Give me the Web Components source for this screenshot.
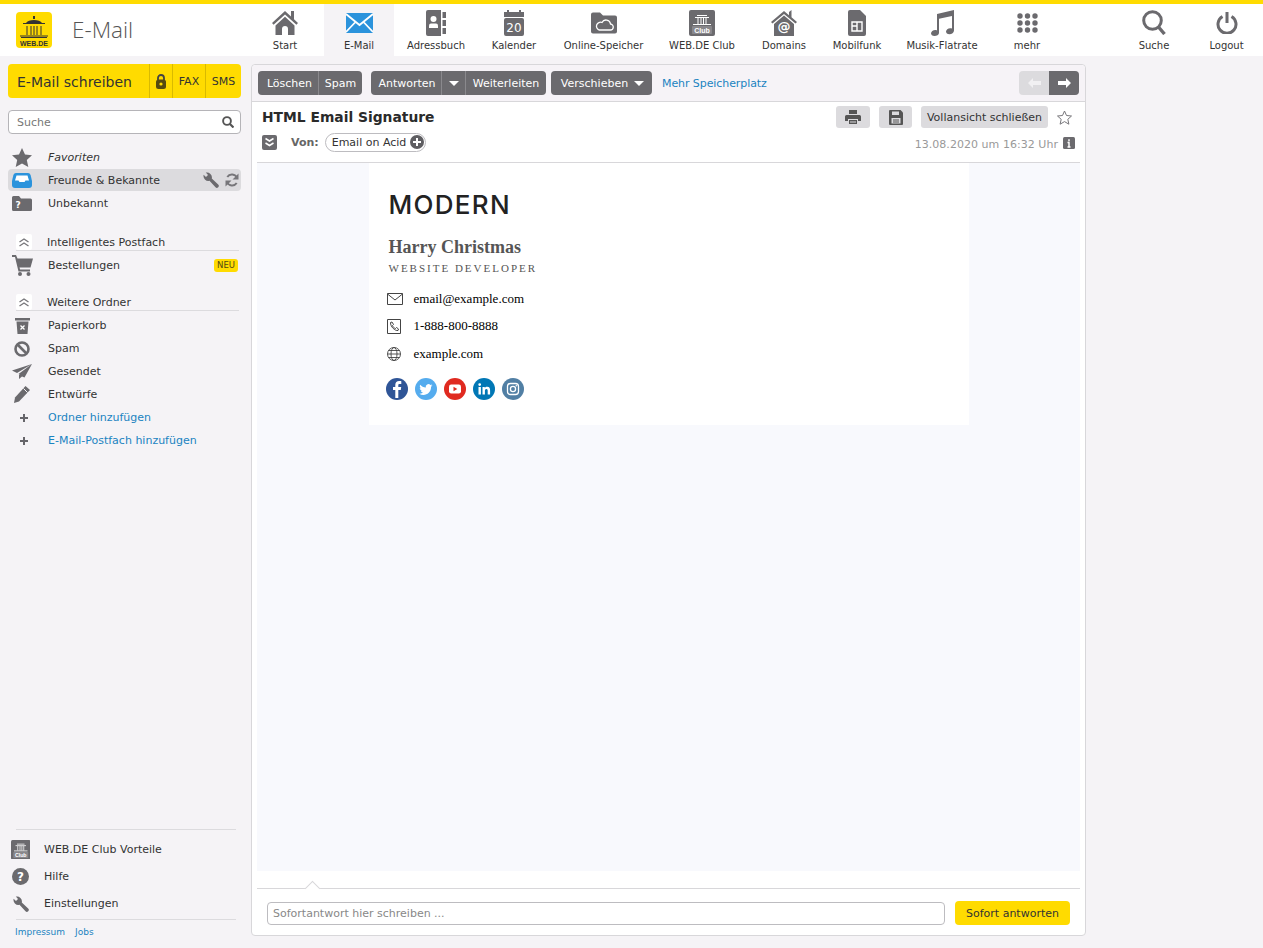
<!DOCTYPE html>
<html lang="de"><head><meta charset="utf-8"><title>WEB.DE E-Mail</title>
<style>
html,body{margin:0;height:948px;overflow:hidden;background:#f5f3f6;font:11px "DejaVu Sans",sans-serif;color:#333}
body{display:flex;flex-direction:column}
x-columns{flex:1}
</style></head><body>
<x-topbar></x-topbar>
<x-columns>
 <x-sidebar></x-sidebar>
 <x-mail></x-mail>
</x-columns>
<script>
const G='#6b6a6e';
const ICONS={
home:[26,26,`<path fill="${G}" d="M0 13 13 1l6 5.500V1h3v8.300l4 3.700-1.600 1.800L13 4.400 1.600 14.800zM3.500 15.500 13 6.800l9.500 8.700V25H16v-6a3 3 0 0 0-6 0v6H3.500z"/>`],
mail:[27,20,`<rect width="27" height="20" rx="1" fill="#2b93dc"/><path d="M0 1l13.500 11L27 1M0 19l9-9.500M27 19l-9-9.500" fill="none" stroke="#fff" stroke-width="1.800"/>`],
book:[20,26,`<path fill="${G}" d="M2 0h13v26H2a2 2 0 0 1-2-2V2a2 2 0 0 1 2-2zM16.500 2H20v6h-3.500zM16.500 10H20v6h-3.500zM16.500 18H20v6h-3.500z"/><circle cx="7.500" cy="9" r="3" fill="#fff"/><path fill="#fff" d="M3 18v-2.500q0-2 2-2h5q2 0 2 2V18z"/>`],
cal:[20,26,`<path fill="${G}" d="M0 2h3V0h2v2h10V0h2v2h3v5H0zM2 8h16a2 2 0 0 1 2 2v14a2 2 0 0 1-2 2H2a2 2 0 0 1-2-2V10a2 2 0 0 1 2-2z"/><text x="10" y="22" text-anchor="middle" fill="#fff" font-family="DejaVu Sans" font-size="12">20</text>`],
cloud:[26,22,`<path fill="${G}" d="M0 2.500A2 2 0 0 1 2 .5h7l3 3h12a2 2 0 0 1 2 2v14a2 2 0 0 1-2 2H2a2 2 0 0 1-2-2z"/><path fill="none" stroke="#fff" stroke-width="1.300" d="M8 18h11a3 3 0 0 0 .5-6 4.500 4.500 0 0 0-8.500-1.500A3.800 3.800 0 0 0 8 18z"/>`],
club:[26,26,`<rect width="26" height="26" rx="2" fill="${G}"/><path fill="none" stroke="#fff" stroke-width="1" d="M6 7.500h14M8 5.500h10M9 8v6M12 8v6M14.500 8v6M17 8v6M4 14.500h18"/><rect x="3" y="16" width="20" height="8" rx="1" fill="#88878b"/><text x="13" y="22.500" text-anchor="middle" fill="#fff" font-family="Liberation Sans" font-size="7" font-weight="700">Club</text>`],
domain:[26,26,`<path fill="${G}" d="M0 12 13 1l5 4.200V2l2.500-2v7.300L26 12l-1.500 1.600L13 4 1.500 13.600zM3 14 13 5.500 23 14v12H3z"/><text x="13" y="21" text-anchor="middle" fill="#fff" font-family="DejaVu Sans" font-size="13" font-weight="700">@</text>`],
sim:[18,26,`<path fill="${G}" d="M2 0h10l6 6v18a2 2 0 0 1-2 2H2a2 2 0 0 1-2-2V2a2 2 0 0 1 2-2z"/><path fill="none" stroke="#fff" stroke-width="1.400" d="M4 12h10v9H4zM9 12v9M4 16h5"/>`],
music:[24,26,`<path fill="${G}" d="M7 4 24 0v20.500c0 2.200-2.300 3.800-4.500 3.800S16 23 16 21.500s2-3.300 4.200-3.300c.6 0 1.300.1 1.800.4V6L9 8.800V23c0 1.700-2.300 3-4.500 3S1 24.800 1 23.300s2-3.300 4.300-3.300c.6 0 1.200.1 1.700.4z"/>`],
dots:[21,20,[3,10.500,18].flatMap(x=>[3,10,17].map(y=>`<circle cx="${x}" cy="${y}" r="2.700" fill="${G}"/>`)).join('')],
search:[24,25,`<circle cx="10.500" cy="10.500" r="8.800" fill="none" stroke="${G}" stroke-width="3"/><path d="M16.500 17l6 7" stroke="${G}" stroke-width="3.400" fill="none"/>`],
power:[22,22,`<path d="M6.500 4.500a9 9 0 1 0 9 0M11 0v11" fill="none" stroke="${G}" stroke-width="3"/>`],
lock:[10,15,`<path d="M2 6V4a3 3 0 0 1 6 0v2" fill="none" stroke="#444" stroke-width="1.800"/><rect y="5.500" width="10" height="9.500" rx="2.500" fill="#554a10"/><circle cx="5" cy="10" r="1.600" fill="#ffdb00"/>`],
lens:[12,12,`<circle cx="5" cy="5" r="3.900" fill="none" stroke="#555" stroke-width="1.900"/><path d="M8 8l3.500 3.500" stroke="#555" stroke-width="2.200"/>`],
star:[20,19,`<path fill="${G}" d="M10 0l3 6.500 7 .8-5.200 4.700 1.500 7L10 15.400 3.700 19l1.500-7L0 7.300l7-.8z"/>`],
inbox:[20,15,`<path fill="#2b93dc" d="M4 0h12q2 0 2.600 2L20 8v4q0 3-3 3H3q-3 0-3-3V8l1.400-6Q2 0 4 0z"/><path fill="#fff" d="M4.500 2.500h11L17 7.500h-3.500l-1 1.500h-5l-1-1.500H3z"/>`],
qfolder:[20,15,`<path fill="${G}" d="M0 1.500Q0 0 1.500 0H7l2 2.500h9.500q1.500 0 1.500 1.500v9.500q0 1.500-1.500 1.500h-17Q0 15 0 13.500z"/><text x="6" y="12" text-anchor="middle" fill="#fff" font-family="DejaVu Sans" font-size="9" font-weight="700">?</text>`],
chev:[16,16,`<rect width="16" height="16" rx="2" fill="#fff"/><path d="M3.500 8 8 5l4.500 3M3.500 12 8 9l4.500 3" fill="none" stroke="#77767a" stroke-width="1.300"/>`],
cart:[21,21,`<path fill="${G}" d="M0 0h4l1.500 3.500H21l-2.500 9H7.500l.6 2H18v2H6.500L3 2H0z"/><circle cx="8" cy="19" r="2" fill="${G}"/><circle cx="16.500" cy="19" r="2" fill="${G}"/>`],
trash:[15,16,`<path fill="${G}" d="M0 0h15v2.500H0zM1.500 3.500h12L12.500 16h-10z"/><path d="M5.500 7.500l4 4M9.500 7.500l-4 4" stroke="#fff" stroke-width="1.300"/>`],
ban:[16,16,`<circle cx="8" cy="8" r="6.500" fill="none" stroke="${G}" stroke-width="2.600"/><path d="M3.500 3.500l9 9" stroke="${G}" stroke-width="2.600"/>`],
plane:[20,15,`<path fill="${G}" d="M20 0 0 6.500l5 2.500zM20 0 6.500 10l5.500 2zM20 0 7 11v4l3-2.500 2.500 1z"/>`],
pencil:[16,17,`<path fill="${G}" d="M11.500 0 16 4 5 15.500 0 17l1-5.500z"/><path d="M9.500 2.500l4 4" stroke="#f5f3f6" stroke-width="1"/>`],
plus:[14,10,`<rect width="14" height="10" fill="none"/><path d="M9 1v8M5 5h8" stroke="#66656a" stroke-width="2"/>`],
wrench:[16,16,`<path fill="${G}" d="M2.800.6 5 3 3 5 .6 2.800A5 5 0 0 0 6.500 8.800l6 6.400a1.900 1.900 0 0 0 2.700-2.700l-6.400-6A5 5 0 0 0 2.800.6z"/>`],
refresh:[14,14,`<path d="M12 5A5.500 5.500 0 0 0 2.300 4M2 9a5.500 5.500 0 0 0 9.700 1" fill="none" stroke="#77767a" stroke-width="2"/><path fill="#77767a" d="M13.500 .5v6h-6zM.5 13.500v-6h6z"/>`],
print:[16,14,`<path fill="#555" d="M4 0h8v4H4zM1.500 5h13q1.500 0 1.500 1.500V11h-3V9H3v2H0V6.500Q0 5 1.500 5z"/><path fill="#555" d="M4 10h8v4H4z"/><path d="M5 12h6" stroke="#dcdbde"/>`],
save:[14,15,`<path fill="#555" d="M1 0h10.500L14 2.500V14q0 1-1 1H1q-1 0-1-1V1q0-1 1-1z"/><path fill="#dcdbde" d="M3 1.500h7v3.500H3zM2.500 8h9v5.500h-9z"/><path d="M4 10h6M4 12h6" stroke="#555"/>`],
ostar:[15,15,`<path fill="none" stroke="#77767a" d="M7.500 1l2 4.500 5 .5-3.700 3.300 1.100 4.900-4.400-2.600-4.400 2.600 1.100-4.900L.5 6l5-.5z"/>`],
down2:[15,15,`<rect width="15" height="15" rx="2" fill="${G}"/><path d="M3.500 3.500 7.500 6l4-2.500M3.500 8l4 2.500 4-2.500" fill="none" stroke="#fff" stroke-width="1.500"/>`],
info:[12,12,`<rect width="12" height="12" rx="1.500" fill="${G}"/><path d="M6 2.200v2M6 5.200v4.800M4.500 5.500H6.500M4.500 10h3" stroke="#fff" stroke-width="1.500" fill="none"/>`],
qmark:[17,17,`<circle cx="8.500" cy="8.500" r="8.500" fill="${G}"/><text x="8.500" y="13" text-anchor="middle" fill="#fff" font-family="DejaVu Sans" font-size="12" font-weight="700">?</text>`],
arrowl:[13,10,`<path fill="#f1f0f2" d="M0 5l5-5v3h8v4H5v3z"/>`],
arrowr:[13,10,`<path fill="#fff" d="M13 5 8 0v3H0v4h8v3z"/>`],
caret:[10,5,`<path fill="#fff" d="M0 0h10L5 5z"/>`],
oplus:[14,14,`<circle cx="7" cy="7" r="7" fill="#5f5e62"/><path d="M7 3v8M3 7h8" stroke="#fff" stroke-width="2"/>`],
env:[16,12,`<path fill="none" stroke="#444" d="M.5.5h15v11H.5zM.5 1 8 7l7.500-6"/>`],
phone:[14,15,`<path fill="none" stroke="#444" d="M.5.5h13v14H.5z"/><path fill="none" stroke="#444" d="M3.500 3.500l1.500-.5 1.500 2.500-1 1c.5 1.500 1.500 2.500 3 3l1-1 2 1.500-.5 1.500c-3 .5-7.500-3.500-7.500-8z"/>`],
globe:[14,14,`<g fill="none" stroke="#444" stroke-width=".9"><circle cx="7" cy="7" r="6.500"/><ellipse cx="7" cy="7" rx="3" ry="6.500"/><path d="M.5 7h13M1.500 3.500h11M1.500 10.500h11"/></g>`],
fb:[22,22,`<circle cx="11" cy="11" r="11" fill="#2f5597"/><path fill="#fff" d="M12.300 20v-8h2.500l.4-3h-2.900V7.300c0-.9.300-1.400 1.500-1.400h1.500V3.200c-.3 0-1.200-.1-2.200-.1-2.300 0-3.800 1.400-3.800 3.900V9H7v3h2.300v8z"/>`],
tw:[22,22,`<circle cx="11" cy="11" r="11" fill="#55acee"/><path fill="#fff" d="M17.500 7.300c-.5.200-1 .4-1.600.5.600-.3 1-.9 1.200-1.500-.5.300-1.100.6-1.700.7a2.700 2.700 0 0 0-4.600 2.500C8.500 9.400 6.500 8.300 5.200 6.700c-.7 1.200-.4 2.800.8 3.600-.4 0-.8-.1-1.200-.3 0 1.300.9 2.400 2.200 2.700-.4.100-.8.100-1.200 0 .3 1.100 1.300 1.800 2.500 1.900-1.200.9-2.600 1.300-4 1.100 4.900 3 11.800.3 11.800-6.900.5-.4.900-.9 1.400-1.500z"/>`],
yt:[22,22,`<circle cx="11" cy="11" r="11" fill="#e02a20"/><rect x="5" y="6.500" width="12" height="9" rx="2.200" fill="#fff"/><path fill="#e02a20" d="M9.500 8.800v4.400l3.800-2.200z"/>`],
li:[22,22,`<circle cx="11" cy="11" r="11" fill="#0077b5"/><path fill="#fff" d="M5.500 9h2.400v7.500H5.500zM6.700 5.200a1.400 1.400 0 1 1 0 2.800 1.400 1.400 0 0 1 0-2.800zM9.500 9h2.300v1c.4-.7 1.200-1.200 2.400-1.200 2.400 0 2.900 1.600 2.900 3.700v4h-2.400V13c0-1-.1-2.100-1.300-2.100-1.300 0-1.500 1-1.500 2v3.600H9.500z"/>`],
ig:[22,22,`<circle cx="11" cy="11" r="11" fill="#517fa4"/><rect x="5.500" y="5.500" width="11" height="11" rx="3" fill="none" stroke="#fff" stroke-width="1.300"/><circle cx="11" cy="11" r="2.600" fill="none" stroke="#fff" stroke-width="1.300"/><circle cx="14.300" cy="7.700" r=".8" fill="#fff"/>`],
logo:[36,36,`<rect width="36" height="36" rx="4" fill="#ffdb00"/><path fill="none" stroke="#333" d="M7 11.500h22M11 14v9M15 14v9M18 14v9M21 14v9M25 14v9M4 24h28"/><path fill="#333" d="M10 11c2-4 14-4 16 0zM17 4h2v3h-2zM5 25h26v1H5z"/><text x="18" y="33.500" text-anchor="middle" fill="#333" font-family="Liberation Sans" font-size="7" font-weight="700">WEB.DE</text>`]
};
class XIcon extends HTMLElement{connectedCallback(){
 const [w,h,b]=ICONS[this.getAttribute('name')];
 const s=this.getAttribute('scale')||1;
 const r=this.shadowRoot||this.attachShadow({mode:'open'});
 r.innerHTML=`<style>:host{display:block;width:${w*s}px;height:${h*s}px;flex:none}svg{display:block}</style><svg width="${w*s}" height="${h*s}" viewBox="0 0 ${w} ${h}">${b}</svg>`;
}}
customElements.define('x-icon',XIcon);

function tpl(el,html){const r=el.attachShadow({mode:'open'});r.innerHTML=html;}

class XNavItem extends HTMLElement{connectedCallback(){
 tpl(this,`<style>:host{display:flex;flex-direction:column;align-items:center;width:${this.getAttribute('w')}px;height:52px;flex:none;color:#333}
 :host([active]){background:#f5f3f6}
 .i{height:31px;margin-top:3px;display:flex;align-items:center;justify-content:center}
 .t{font-size:10px;line-height:12px;margin-top:2px;white-space:nowrap}</style>
 <div class="i"><x-icon name="${this.getAttribute('icon')}"></x-icon></div><div class="t"><slot></slot></div>`);
}}
customElements.define('x-nav-item',XNavItem);

class XTopbar extends HTMLElement{constructor(){super();tpl(this,`<style>
 :host{display:flex;height:52px;border-top:4px solid #ffdb00;background:#fff;flex:none}
 .brand{width:246px;flex:none;display:flex;align-items:center;padding-left:16px;box-sizing:border-box;gap:20px}
 .brand span{font:300 22.500px "Open Sans",sans-serif;color:#555;margin-top:-1px}
 .sp{flex:1}</style>
 <div class="brand"><x-icon name="logo"></x-icon><span>E-Mail</span></div>
 <x-nav-item w="78" icon="home">Start</x-nav-item>
 <x-nav-item w="70" icon="mail" active>E-Mail</x-nav-item>
 <x-nav-item w="84" icon="book">Adressbuch</x-nav-item>
 <x-nav-item w="72" icon="cal">Kalender</x-nav-item>
 <x-nav-item w="107" icon="cloud">Online-Speicher</x-nav-item>
 <x-nav-item w="90" icon="club">WEB.DE Club</x-nav-item>
 <x-nav-item w="74" icon="domain">Domains</x-nav-item>
 <x-nav-item w="72" icon="sim">Mobilfunk</x-nav-item>
 <x-nav-item w="98" icon="music">Musik-Flatrate</x-nav-item>
 <x-nav-item w="72" icon="dots">mehr</x-nav-item>
 <div class="sp"></div>
 <x-nav-item w="72" icon="search">Suche</x-nav-item>
 <x-nav-item w="73" icon="power">Logout</x-nav-item>`);}}
customElements.define('x-topbar',XTopbar);

class XColumns extends HTMLElement{constructor(){super();tpl(this,`<style>:host{display:flex;align-items:flex-start;padding:8px 177px 0 8px;gap:10px;min-height:0}</style><slot></slot>`);}}
customElements.define('x-columns',XColumns);

class XFolder extends HTMLElement{connectedCallback(){
 const ic=this.getAttribute('icon');
 tpl(this,`<style>:host{display:flex;align-items:center;height:23px;color:#333}
 :host([sel]){background:#dcdbde;border-radius:4px;height:22px;margin:0 0 1px}
 :host([link]){color:#1a83c1}
 :host([it]){font-style:italic}
 .i{width:28px;margin-right:12px;display:flex;justify-content:center;flex:none}
 .t{flex:1;white-space:nowrap}
 .r{display:flex;align-items:center;gap:6px;padding-right:2px}</style>
 <div class="i"><x-icon name="${ic}"></x-icon></div><div class="t"><slot></slot></div><div class="r"><slot name="r"></slot></div>`);
}}
customElements.define('x-folder',XFolder);

class XSection extends HTMLElement{constructor(){super();tpl(this,`<style>:host{display:flex;align-items:center;box-sizing:border-box;height:19px;padding-top:2px;margin:0 2px 3px 8px;border-bottom:1px solid #dcdbde;gap:15px;color:#333}</style><x-icon name="chev"></x-icon><span><slot></slot></span>`);}}
customElements.define('x-section',XSection);

class XCompose extends HTMLElement{constructor(){super();tpl(this,`<style>
 :host{display:flex;height:34px;background:#ffdb00;border-radius:4px;color:#333;align-items:stretch;flex:none}
 .m{flex:1;font-size:14px;padding:1px 0 0 9px;display:flex;align-items:center;white-space:nowrap}
 .b{display:flex;align-items:center;justify-content:center;border-left:1px solid #d9ba00;font-size:11px}
 </style><div class="m">E-Mail schreiben</div>
 <div class="b" style="width:22px"><x-icon name="lock"></x-icon></div>
 <div class="b" style="width:32px">FAX</div><div class="b" style="width:35px">SMS</div>`);}}
customElements.define('x-compose',XCompose);

class XSidebar extends HTMLElement{constructor(){super();tpl(this,`<style>
 :host{display:flex;flex-direction:column;width:233px;height:880px;flex:none}
 .search{margin-top:12px;height:22px;flex:none;border:1px solid #b5b4b8;border-radius:4px;background:#fff;display:flex;align-items:center;justify-content:space-between;padding:0 6px 0 8px;color:#777;font-size:11px}
 .list{margin-top:12px}
 .gap1{height:17px}.gap2{height:15px}
 .foot{margin-top:auto;padding:0 5px 0 3px}
 .foot .row{display:flex;align-items:center;height:27px;gap:14px}
 .foot .row .ic{width:19px;display:flex;justify-content:center}
 .ln{border-top:1px solid #dcdbde;margin-left:5px}
 .links{color:#1a83c1;font-size:9px;display:flex;gap:10px;padding:6px 0 0 4px;height:18px;line-height:12px}
 .new{background:#ffdb00;border-radius:3px;font-size:8.500px;padding:1px 3px;line-height:11px;color:#554a10;margin-right:1px}
 </style>
 <x-compose></x-compose>
 <div class="search"><span>Suche</span><x-icon name="lens"></x-icon></div>
 <div class="list">
 <x-folder icon="star" it>Favoriten</x-folder>
 <x-folder icon="inbox" sel>Freunde &amp; Bekannte<x-icon slot="r" name="wrench"></x-icon><x-icon slot="r" name="refresh"></x-icon></x-folder>
 <x-folder icon="qfolder">Unbekannt</x-folder>
 <div class="gap1"></div>
 <x-section>Intelligentes Postfach</x-section>
 <x-folder icon="cart">Bestellungen<span class="new" slot="r">NEU</span></x-folder>
 <div class="gap2"></div>
 <x-section>Weitere Ordner</x-section>
 <x-folder icon="trash">Papierkorb</x-folder>
 <x-folder icon="ban">Spam</x-folder>
 <x-folder icon="plane">Gesendet</x-folder>
 <x-folder icon="pencil">Entwürfe</x-folder>
 <x-folder icon="plus" link>Ordner hinzufügen</x-folder>
 <x-folder icon="plus" link>E-Mail-Postfach hinzufügen</x-folder>
 </div>
 <div class="foot"><div class="ln" style="padding-top:6px"></div>
 <div class="row"><div class="ic"><x-icon name="club" scale=".75"></x-icon></div>WEB.DE Club Vorteile</div>
 <div class="row"><div class="ic"><x-icon name="qmark"></x-icon></div>Hilfe</div>
 <div class="row"><div class="ic"><x-icon name="wrench"></x-icon></div>Einstellungen</div>
 <div class="ln" style="margin-top:2px"></div>
 <div class="links"><span>Impressum</span><span>Jobs</span></div></div>`);}}
customElements.define('x-sidebar',XSidebar);

class XBtnGroup extends HTMLElement{constructor(){super();tpl(this,`<style>:host{display:flex;height:24px;background:${G};color:#fff;border-radius:4px;overflow:hidden;align-items:stretch;flex:none}</style><slot></slot>`);}}
customElements.define('x-btn-group',XBtnGroup);
class XBtn extends HTMLElement{connectedCallback(){tpl(this,`<style>:host{display:flex;align-items:center;justify-content:center;gap:6px;box-sizing:border-box;font-size:11px;white-space:nowrap;width:${this.getAttribute('w')}px}
 :host([sep]){border-left:1px solid #8a898d}</style><slot></slot>`);}}
customElements.define('x-btn',XBtn);

class XGrayBtn extends HTMLElement{constructor(){super();tpl(this,`<style>:host{display:flex;height:22px;background:#dcdbde;border-radius:3px;align-items:center;justify-content:center;font-size:11px;color:#333;flex:none;box-sizing:border-box;white-space:nowrap}</style><slot></slot>`);}}
customElements.define('x-gray-btn',XGrayBtn);

class XSignature extends HTMLElement{constructor(){super();tpl(this,`<style>
 :host{display:block;width:600px;height:262px;background:#fff;box-sizing:border-box;padding:26px 20px 0 20px;font-family:"Liberation Serif",serif;color:#000;flex:none}
 .logo{font:500 26px/32px Inter,sans-serif;color:#222;letter-spacing:1.300px}
 .name{font-weight:700;font-size:18px;line-height:22px;color:#555;margin-top:15px}
 .role{font-size:11px;letter-spacing:2px;color:#555;line-height:14px;margin-top:3px}
 .c{display:flex;align-items:center;height:14px;font-size:13px;margin-top:14px;margin-left:-2px}
 .c .ic{width:27px;flex:none}
 .soc{display:flex;gap:7px;margin-top:17px;margin-left:-3px}
 </style>
 <div class="logo">MODERN</div>
 <div class="name">Harry Christmas</div>
 <div class="role">WEBSITE DEVELOPER</div>
 <div class="c" style="margin-top:17px"><div class="ic"><x-icon name="env"></x-icon></div>email@example.com</div>
 <div class="c" style="margin-top:13px"><div class="ic"><x-icon name="phone"></x-icon></div>1-888-800-8888</div>
 <div class="c"><div class="ic"><x-icon name="globe"></x-icon></div>example.com</div>
 <div class="soc"><x-icon name="fb"></x-icon><x-icon name="tw"></x-icon><x-icon name="yt"></x-icon><x-icon name="li"></x-icon><x-icon name="ig"></x-icon></div>`);}}
customElements.define('x-signature',XSignature);

class XMail extends HTMLElement{constructor(){super();tpl(this,`<style>
 :host{display:flex;flex-direction:column;width:835px;height:872px;box-sizing:border-box;border:1px solid #d8d7da;border-radius:4px;background:#fff;flex:none;color:#333}
 .tb{height:37px;box-sizing:border-box;flex:none;background:#f6f3f7;border-bottom:1px solid #d8d7da;border-radius:4px 4px 0 0;display:flex;align-items:center;padding:0 6px;gap:9px}
 .tb a{color:#1a83c1;margin-left:1px;letter-spacing:-.08px}
 .sp{flex:1}
 .hd{flex:none;height:61px;box-sizing:border-box;margin:0 5px;border-bottom:1px solid #d8d7da;padding:0 0 0 5px;display:flex;flex-direction:column}
 .r1{display:flex;align-items:center;height:30px}
 h1{font:700 13.850px "DejaVu Sans",sans-serif;margin:0;flex:1;color:#2a2a2a;white-space:nowrap}
 .r1 x-gray-btn+x-gray-btn{margin-left:9px}
 .r2{display:flex;align-items:center;height:20px}
 .von{font-weight:700;color:#666;margin:0 6px 0 14px}
 .pill{display:flex;align-items:center;gap:4px;height:19px;box-sizing:border-box;border:1px solid #bdbcc0;border-radius:10px;padding:0 1px 0 6px;background:#fff;white-space:nowrap}
 .date{margin-left:auto;color:#999;white-space:nowrap;padding-top:5px;display:flex;align-items:center;gap:5px;margin-right:5px;letter-spacing:.04px}
 .body{flex:1;margin:0 5px;background:#f8f9fd;display:flex;justify-content:center;align-items:flex-start;min-height:0}
 .w{flex:none;height:17px}
 .rp{flex:none;height:47px;box-sizing:border-box;margin:0 5px;border-top:1px solid #d8d7da;position:relative;display:flex;align-items:flex-start;padding:12px 10px 0 10px;gap:10px}
 .tip{position:absolute;left:50px;top:-6px;width:10px;height:10px;background:#fff;border:1px solid #d8d7da;border-right:0;border-bottom:0;transform:rotate(45deg)}
 .in{flex:1;height:23px;margin-top:1px;box-sizing:border-box;border:1px solid #bdbcc0;border-radius:4px;color:#888;padding:0 5px;display:flex;align-items:center;background:#fff}
 .send{width:115px;height:24px;background:#ffdb00;border-radius:4px;display:flex;align-items:center;justify-content:center;flex:none}
 </style>
 <div class="tb">
  <x-btn-group><x-btn w="60" style="padding-left:3px">Löschen</x-btn><x-btn w="44" sep>Spam</x-btn></x-btn-group>
  <x-btn-group><x-btn w="70" style="padding-left:2px">Antworten</x-btn><x-btn w="24" sep><x-icon name="caret"></x-icon></x-btn><x-btn w="81" sep>Weiterleiten</x-btn></x-btn-group>
  <x-btn-group style="margin-left:-4px"><x-btn w="101" style="padding-left:2px">Verschieben <x-icon name="caret"></x-icon></x-btn></x-btn-group>
  <a>Mehr Speicherplatz</a><div class="sp"></div>
  <x-btn-group style="background:#dcdbde"><x-btn w="30"><x-icon name="arrowl"></x-icon></x-btn><x-btn w="30" style="background:${G}"><x-icon name="arrowr"></x-icon></x-btn></x-btn-group>
 </div>
 <div class="hd">
  <div class="r1"><h1>HTML Email Signature</h1>
   <x-gray-btn style="width:34px"><x-icon name="print"></x-icon></x-gray-btn>
   <x-gray-btn style="width:33px"><x-icon name="save"></x-icon></x-gray-btn>
   <x-gray-btn style="width:127px">Vollansicht schließen</x-gray-btn>
   <x-icon name="ostar" style="margin:0 8px 0 9px"></x-icon></div>
  <div class="r2"><x-icon name="down2"></x-icon><span class="von">Von:</span><div class="pill">Email on Acid<x-icon name="oplus"></x-icon></div>
   <div class="date">13.08.2020 um 16:32 Uhr<x-icon name="info" style="margin-top:-3px"></x-icon></div></div>
 </div>
 <div class="body"><x-signature></x-signature></div>
 <div class="w"></div>
 <div class="rp"><div class="tip"></div><div class="in">Sofortantwort hier schreiben ...</div><div class="send">Sofort antworten</div></div>`);}}
customElements.define('x-mail',XMail);
</script>
</body></html>
